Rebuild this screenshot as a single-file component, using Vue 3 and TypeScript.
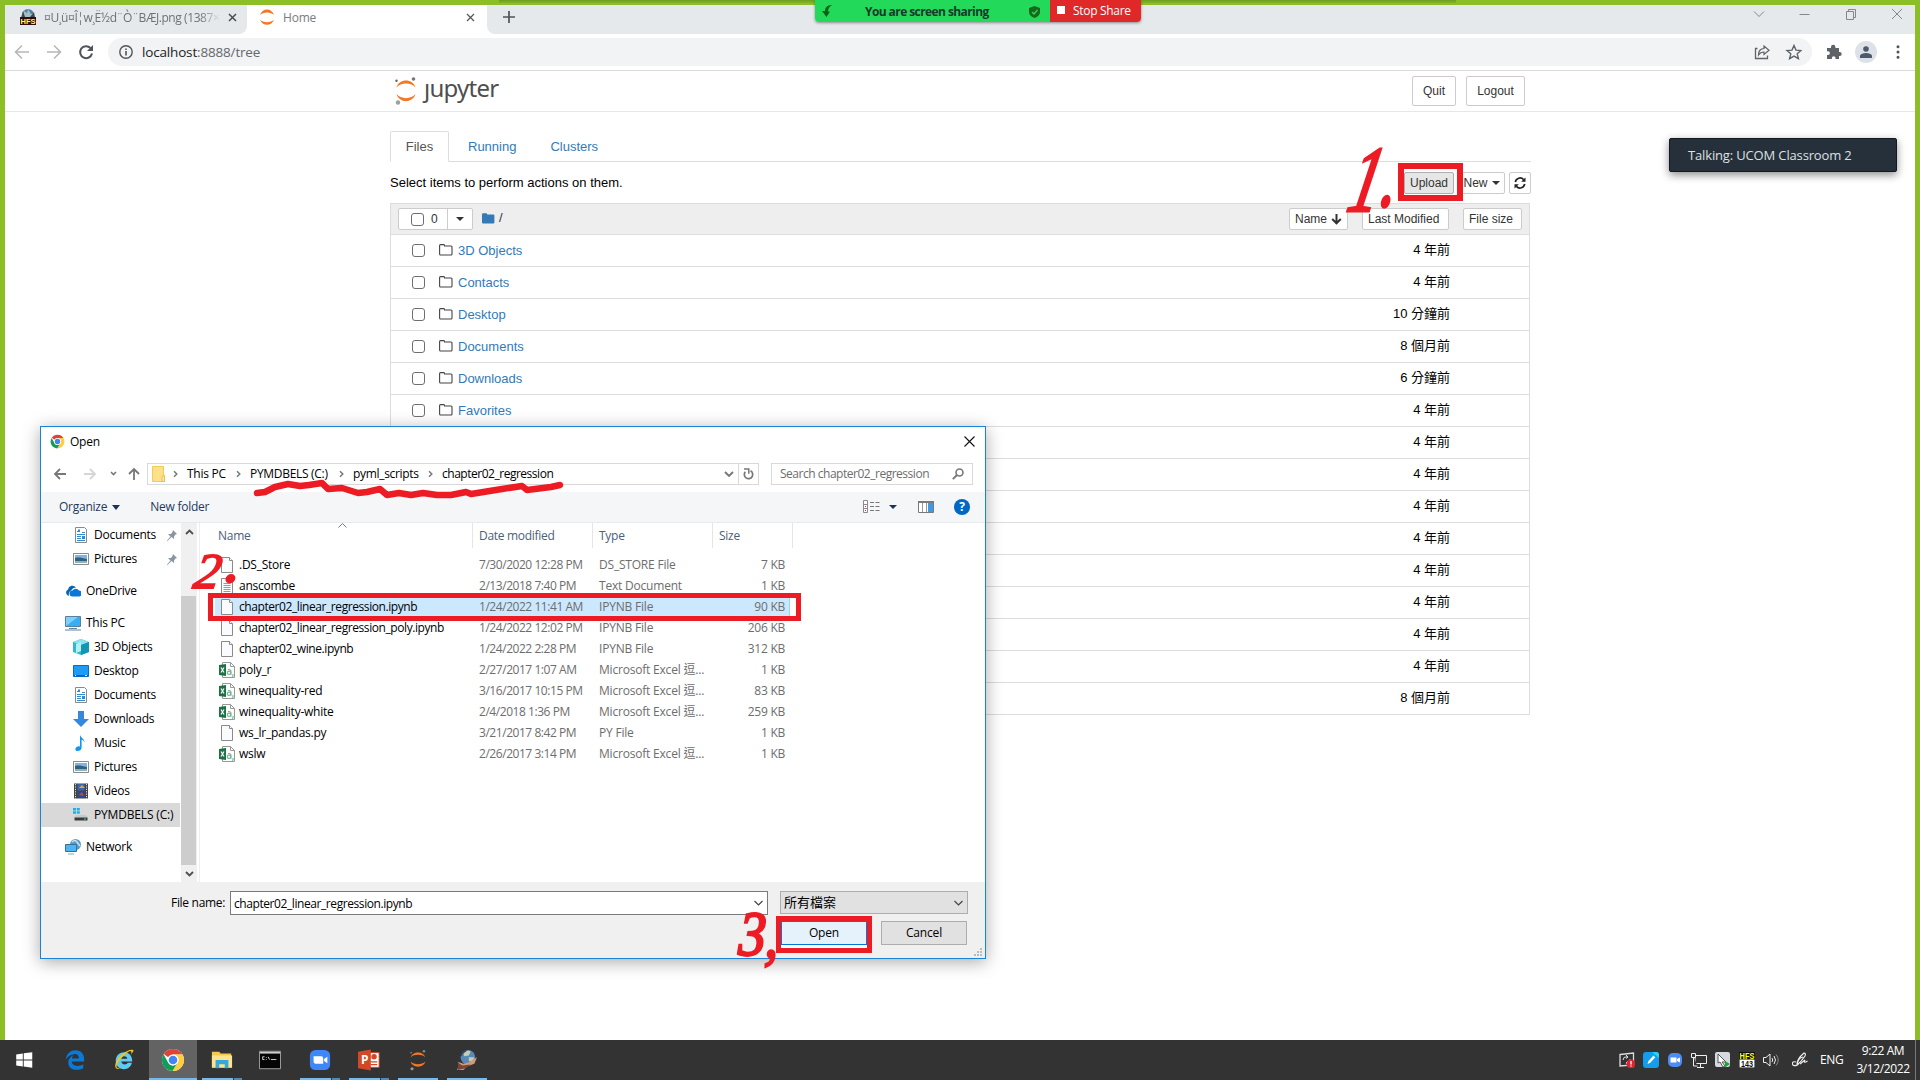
<script setup lang="ts">
interface Folder { name: string; modified: string }
interface TreeItem { label: string; icon: string; top?: boolean; pin?: boolean; gap?: boolean; current?: boolean }
interface FileRow { name: string; date: string; type: string; size: string; icon: string; selected?: boolean }
interface TaskItem { icon: string; left: number; width: number; state: string }

const folders: Folder[] = [
  { name: '3D Objects', modified: '4 年前' },
  { name: 'Contacts', modified: '4 年前' },
  { name: 'Desktop', modified: '10 分鐘前' },
  { name: 'Documents', modified: '8 個月前' },
  { name: 'Downloads', modified: '6 分鐘前' },
  { name: 'Favorites', modified: '4 年前' },
  ...Array.from({ length: 8 }, () => ({ name: '', modified: '4 年前' })),
  { name: '', modified: '8 個月前' },
]

const tree: TreeItem[] = [
  { label: 'Documents', icon: 'docs', pin: true },
  { label: 'Pictures', icon: 'pics', pin: true },
  { label: 'OneDrive', icon: 'cloud', top: true, gap: true },
  { label: 'This PC', icon: 'pc', top: true, gap: true },
  { label: '3D Objects', icon: 'cube' },
  { label: 'Desktop', icon: 'desktop' },
  { label: 'Documents', icon: 'docs' },
  { label: 'Downloads', icon: 'down' },
  { label: 'Music', icon: 'music' },
  { label: 'Pictures', icon: 'pics' },
  { label: 'Videos', icon: 'video' },
  { label: 'PYMDBELS (C:)', icon: 'drive', current: true },
  { label: 'Network', icon: 'network', top: true, gap: true },
]

const excel = 'Microsoft Excel 逗...'
const files: FileRow[] = [
  { name: '.DS_Store', date: '7/30/2020 12:28 PM', type: 'DS_STORE File', size: '7 KB', icon: 'file' },
  { name: 'anscombe', date: '2/13/2018 7:40 PM', type: 'Text Document', size: '1 KB', icon: 'text' },
  { name: 'chapter02_linear_regression.ipynb', date: '1/24/2022 11:41 AM', type: 'IPYNB File', size: '90 KB', icon: 'file', selected: true },
  { name: 'chapter02_linear_regression_poly.ipynb', date: '1/24/2022 12:02 PM', type: 'IPYNB File', size: '206 KB', icon: 'file' },
  { name: 'chapter02_wine.ipynb', date: '1/24/2022 2:28 PM', type: 'IPYNB File', size: '312 KB', icon: 'file' },
  { name: 'poly_r', date: '2/27/2017 1:07 AM', type: excel, size: '1 KB', icon: 'csv' },
  { name: 'winequality-red', date: '3/16/2017 10:15 PM', type: excel, size: '83 KB', icon: 'csv' },
  { name: 'winequality-white', date: '2/4/2018 1:36 PM', type: excel, size: '259 KB', icon: 'csv' },
  { name: 'ws_lr_pandas.py', date: '3/21/2017 8:42 PM', type: 'PY File', size: '1 KB', icon: 'file' },
  { name: 'wslw', date: '2/26/2017 3:14 PM', type: excel, size: '1 KB', icon: 'csv' },
]

const crumbs = ['This PC', 'PYMDBELS (C:)', 'pyml_scripts', 'chapter02_regression']

const tasks: TaskItem[] = [
  { icon: 'win', left: 0, width: 48, state: '' },
  { icon: 'edge', left: 3, width: 48, state: '' },
  { icon: 'ie', left: 1, width: 48, state: '' },
  { icon: 'chrome', left: 1, width: 48, state: 'active' },
  { icon: 'folder', left: 5, width: 40, state: 'multi' },
  { icon: 'cmd', left: 8, width: 40, state: '' },
  { icon: 'zoom', left: 10, width: 40, state: 'multi' },
  { icon: 'ppt', left: 9, width: 40, state: 'multi' },
  { icon: 'jup', left: 9, width: 40, state: 'open' },
  { icon: 'globe', left: 9, width: 40, state: 'open' },
]

const tray = ['tsync', 'tpen', 'tzoom', 'tnet', 'tcursor', 'thfs', 'tvol', 'tink']

const chrome = `<circle cx="12" cy="12" r="11" fill="#fff"/><path d="M12 1a11 11 0 0 1 9.53 5.5H12A5.5 5.5 0 0 0 7.2 9.3L2.8 6A11 11 0 0 1 12 1z" fill="#db4437"/><path d="M21.5 6.5A11 11 0 0 1 11.5 23L16.8 14.7A5.5 5.5 0 0 0 12 6.5z" fill="#ffcd40"/><path d="M2.6 6.2A11 11 0 0 0 11.5 23l4.6-7.4A5.5 5.5 0 0 1 7.2 14.7z" fill="#0f9d58"/><circle cx="12" cy="12" r="5.4" fill="#fff"/><circle cx="12" cy="12" r="4.3" fill="#4285f4"/>`
const page = `<path d="M2.5.5h8l3 3v12h-11z" fill="#fafbfc" stroke="#8a8a8a"/><path d="M10.5.5v3h3" fill="#fff" stroke="#8a8a8a"/>`

const icons: Record<string, string> = {
  file: page,
  text: page + `<path d="M4.500 5.500h7M4.500 7.500h7M4.500 9.500h7M4.500 11.500h7M4.500 13.500h7" stroke="#999"/>`,
  csv: `<path d="M3.500.5h8l4 4v11h-12z" fill="#fff" stroke="#999"/><path d="M11.500.5v4h4" fill="none" stroke="#999"/><path d="M0 3l7-1v12l-7-1z" fill="#1e7145"/><path d="M2 5.500l3 5M5 5.500l-3 5" stroke="#fff" stroke-width="1.200"/><circle cx="10" cy="10.800" r="1.700" fill="none" stroke="#6db58b" stroke-width="1.100"/><path d="M9 7.600q3-.4 3 2v3.200M14 12v2l-1 .6" fill="none" stroke="#6db58b" stroke-width="1.100"/>`,
  docs: `<path d="M2.500.5h9l2 2v13h-11z" fill="#fff" stroke="#8a8a8a"/><path d="M4 4.500h3M9 5.500h3M4 7.500h8M4 9.500h4M4 11.500h4M4 13.500h8" stroke="#2f8bcf"/><path d="M9 9h3v3H9zM5 2.500h2v2H5z" fill="#2f8bcf"/>`,
  pics: `<path d="M.5 2.500h15v11H.5z" fill="#fff" stroke="#8a8a8a"/><path d="M2 4h12v4H2z" fill="#7fb5e6"/><path d="M2 7c4-1 7 0 12 1v4H2z" fill="#33607a"/><path d="M2 10h12v2H2z" fill="#8ab3c4"/>`,
  cloud: `<path d="M4 13a3.500 3.500 0 0 1-1-6.600A4.500 4.500 0 0 1 11 4.500c-2 0-4 1-4.700 3C4 8 3.600 11 4 13z" fill="#0364b8"/><path d="M7.500 13.500a3 3 0 0 1 0-6 3.800 3.800 0 0 1 6.500 0 3 3 0 0 1-.5 6z" fill="#0a78d4"/>`,
  pc: `<path d="M.5 1.500h15v10H.5z" fill="#35aef5" stroke="#5c7f99"/><path d="M1 11L13 2H1z" fill="#7dd0ff"/><path d="M4 13h8v1H4zM0 14.500h16v1H0z" fill="#5c87a5"/>`,
  cube: `<path d="M8 0l8 3v10l-8 3-8-3V3z" fill="#32b9cf"/><path d="M0 3l8-3 8 3-8 3z" fill="#8de3ee"/><path d="M8 6l8-3v10l-8 3z" fill="#1496b3"/><path d="M3 5l5-2v9l-5 2z" fill="#b5f0f5"/>`,
  desktop: `<path d="M.5 2.500h15v11H.5z" fill="#1c9cf6" stroke="#0a6cc0"/><path d="M1 12.500h14" stroke="#0b5ea9"/><path d="M2 12.500h1M12 12.500h2" stroke="#fff"/>`,
  down: `<path d="M5 0h6v8h5l-8 8-8-8h5z" fill="#3289dd"/>`,
  music: `<path d="M7 0c1 3 5 4 4.600 8-.2-2-1.600-3-3-3.200V13c-.4 2-2 3-4 3-3 0-3-4 .4-4.600.8-.2 1.500 0 2 .2z" fill="#1296f3"/>`,
  video: `<path d="M1 .5h14v15H1z" fill="#444"/><path d="M4.500 1h7v6.500h-7z" fill="#3b62b5"/><path d="M4.500 8.500h7V15h-7z" fill="#28499a"/><path d="M6 5l3-3 3 3z" fill="#d2b128"/><path d="M6 12l3-3 2 4z" fill="#ba4c30"/><path d="M2.500 1v15M13.500 1v15" stroke="#ddd" stroke-dasharray="1.200 1.200"/>`,
  drive: `<path d="M0 1h3v2.500H0zM3.800 1h3v2.500h-3zM0 4.300h3v2.500H0zM3.800 4.300h3v2.500h-3z" fill="#1db1ea"/><path d="M3 8h10l2 3H1z" fill="#c5c9cc"/><path d="M1.500 10.500h13v3h-13z" fill="#3a3d3f"/><path d="M11 12h2" stroke="#45e05a"/>`,
  network: `<circle cx="10.500" cy="5.500" r="5.500" fill="#5c9cc4"/><path d="M7 3q3-3 5 0t3 4" fill="none" stroke="#c5e3f2" stroke-width="1.500"/><path d="M.5 5.500h11v7H.5z" fill="#4cb5f5" stroke="#3a6f96"/><path d="M3 15h6" stroke="#8aa"/>`,
  win: `<path d="M3.500 6l7.200-1.100v6.600H3.500zM11.700 4.700L21 3.500v8h-9.300zM3.500 12.500h7.200v6.600L3.500 18zM11.700 12.500H21v8l-9.300-1.300z" fill="#fff"/>`,
  edge: `<path d="M2 11.500C2.600 5 7 1.300 12.500 1.300 19 1.300 22 6 22 11v2.600H8.500c.3 5.500 8 6 12.500 3v4.300c-6.500 3.600-16 2.200-16.400-6 0-4 2.200-6.700 5.600-8.200-1 1.200-1.500 2.300-1.600 3.700h7.600c0-4-2.500-5-5-4.800C7.500 5.800 4 8 2 11.500z" fill="#0a7ad8"/>`,
  ie: `<path d="M12 3.500c5.500 0 9 4 9 10H9c.6 4 6 4.200 7 1.500h4.600c-1 4.500-4.500 7-8.600 7-5.600 0-9-4-9-9.200 0-5.300 3.600-9.300 9-9.300zM9 10.500h6.600C15 7 9.500 7 9 10.500z" fill="#5ecbf3"/><path d="M22 1c-5-2-16 6-19 14-2 6 1 8 5 6-7 1-4-6 1-11S19 .5 20 3c.4 1 0 2-.6 3.500C22 3 23 1.700 22 1z" fill="#f3c61c"/>`,
  chrome,
  folder: `<path d="M1 3h8l1.500 2H22v15H1z" fill="#f2c94c"/><path d="M1 7h22v13.500H1z" fill="#fde28f"/><path d="M5 21v-9h14v9h-4v-4.500H9V21z" fill="#35a8dc"/>`,
  cmd: `<path d="M.5 2.500h23v19H.5z" fill="#050505" stroke="#aaa"/><path d="M1 4h22" stroke="#ccc" stroke-width="2"/><path d="M6 8.500H4v3h2M8 9v.8M8 11v.8M10 8.500l1.500 3M13 11.500h6" stroke="#ddd" fill="none"/>`,
  zoom: `<rect x="1" y="1" width="22" height="22" rx="6" fill="#3f86f8"/><path d="M5 8h8.500q2 0 2 2v6H7q-2 0-2-2zM16.500 11l3.500-2.500v7L16.500 13z" fill="#fff"/>`,
  ppt: `<path d="M11 4h12v16H11z" fill="#fff" stroke="#d24726"/><circle cx="17.500" cy="8.500" r="3" fill="#d24726"/><path d="M14 14h7M14 17h7" stroke="#d24726" stroke-width="1.500"/><path d="M0 3l14-2.500v23L0 21z" fill="#d24726"/><text x="3.200" y="16.500" font-family="Open Sans" font-weight="700" font-size="13" fill="#fff">P</text>`,
  jup: `<path d="M4 9C6 2 18 2 20 9 16 5.500 8 5.500 4 9zM4 14c2 7 14 7 16 0-4 3.500-12 3.500-16 0z" fill="#f37726"/><circle cx="18.500" cy="2.500" r="1.400" fill="#888"/><circle cx="4.500" cy="4" r="1" fill="#777"/><circle cx="5.500" cy="21.500" r="1.700" fill="#999"/>`,
  globe: `<circle cx="13" cy="9" r="8" fill="#5689b8"/><path d="M8 4q4-4 8-1l-2 4-5 1zM14 9l6 0-2 5-4-1z" fill="#c3cdb6"/><path d="M13 1a8 8 0 0 0-8 8l3-4z" fill="#2c3f5c"/><path d="M2 14l6 2 5-1 10-6-3 7-8 3-4 4H1l3-6z" fill="#d09a78"/><path d="M2 15l5 3 9-1-6 4-8 2z" fill="#7a4630"/>`,
  tsync: `<path d="M1 2.500L14.500 1v12L1 14z" fill="none" stroke="#ddd" stroke-width="1.300"/><path d="M4 8q0-3.500 4-3.200M11 7q0 4-4 3.800M7 3l2 2-2 1.500M9 9l-2 2 2 1.500" stroke="#ddd" fill="none"/><circle cx="12" cy="12" r="4.500" fill="#e02230"/><path d="M12 9v3.500M12 13.500v1" stroke="#fff" stroke-width="1.400"/>`,
  tpen: `<rect width="16" height="16" rx="3" fill="#139dec"/><path d="M9 0h4q3 0 3 3v3z" fill="#22d5f5"/><path d="M4.500 12l1-3 5-5.500 1.800 1.700-5 5.500z" fill="#fff"/>`,
  tzoom: `<rect x="1" y="1" width="14" height="14" rx="5" fill="#4a8df8"/><path d="M3.500 5.500h6v5h-6zM10 7l3-1.500v5L10 9z" fill="#fff"/>`,
  tnet: `<path d="M4 3.500h11.500v8H4zM9.500 12v3M6 15.500h7" fill="none" stroke="#eee"/><path d="M.5 1.500h4v4h-4zM2.500 5v9h4" fill="#333" stroke="#eee"/>`,
  tcursor: `<rect width="15" height="15" rx="2" fill="#d6dade"/><path d="M3 2l8 8-4 0 3 4-2 1-3-5-2 1z" fill="#fff" stroke="#555"/><path d="M10 9l5 3-5 3.500z" fill="#16a838"/>`,
  thfs: `<path d="M0 0h16v16H0z" fill="#111"/><path d="M.5 7.500h15v8H.5z" fill="#fff"/><text x=".6" y="6.700" textLength="14.800" lengthAdjust="spacingAndGlyphs" font-family="Liberation Sans" font-weight="700" font-size="8.300" fill="#ff0">HFS</text><text x="2" y="14.700" textLength="12" lengthAdjust="spacingAndGlyphs" font-family="Liberation Sans" font-weight="700" font-size="8.500" fill="#111">143</text>`,
  tvol: `<path d="M.5 5.500H3l4-3.500v12L3 10.500H.500z" fill="none" stroke="#eee"/><path d="M9 6q1.500 2 0 4M11 4q3 4 0 8" fill="none" stroke="#eee"/><path d="M13 2.500q4.500 5.500 0 11" fill="none" stroke="#888"/>`,
  tink: `<path d="M4 10q-4-1-3.500 2t6 .5M5 12q0-5 7-11 2 0 1 3-4 6-8 9 1-7 6-8" fill="none" stroke="#eee" stroke-width="1.200"/><path d="M8 12l5-4q-2 4 2.500 1" fill="none" stroke="#eee" stroke-width="1.200"/>`,
}
</script>

<template>
  <div class="screen">
    <div class="browser">
      <div class="tabstrip">
        <div class="tab first">
          <svg class="hfs" width="16" height="16" viewBox="0 0 16 16"><circle cx="8" cy="6" r="6" fill="#4d7ea8" /><path d="M2 8l2-6 3 2 1-4 3 5 3-1 1 5z" fill="#a4bcc4" /><path d="M1 9l2-7 2 6M10 8l4-5 1 6" fill="#3a4a51" /><path d="M0 8h16v8H0z" fill="#330c0c" /><text x=".5" y="15" textLength="15" lengthAdjust="spacingAndGlyphs" font-family="Liberation Sans" font-size="8" font-weight="700" fill="#ff3">HFS</text></svg>
          <span class="tabtext long">¤U¸ü¤Î¦w¸Ë½d¨Ò¨BÆJ.png (1387×</span>
          <svg class="x" width="9" height="9" viewBox="0 0 9 9"><path d="M1 1l7 7M8 1L1 8" stroke="#4a4d50" stroke-width="1.500" /></svg>
        </div>
        <div class="tab selected">
          <svg width="16" height="16" viewBox="0 0 16 16"><path d="M1 6C3-1.500 13-1.500 15 6 12 2.500 4 2.500 1 6zM1 10.500c2 7 12 7 14 0-3 3.500-11 3.500-14 0z" fill="#f37726" /></svg>
          <span class="tabtext home">Home</span>
          <svg class="x" width="9" height="9" viewBox="0 0 9 9"><path d="M1 1l7 7M8 1L1 8" stroke="#55585c" stroke-width="1.300" /></svg>
        </div>
        <div class="rest">
          <svg width="12" height="12" viewBox="0 0 12 12"><path d="M6 0v12M0 6h12" stroke="#505357" stroke-width="1.700" /></svg>
          <svg class="wins" width="150" height="12" viewBox="0 0 150 12"><path d="M1 3.500l5 5 5-5M46.500 6.500h10M93.500 3.500h7v8h-7zM95.500 3.500v-2h7v8h-2M139 1l10 10M149 1l-10 10" fill="none" stroke="#858789" /></svg>
        </div>
      </div>
      <div class="toolbar">
        <svg class="navs" width="80" height="16" viewBox="0 0 80 16"><path d="M15 8H2M8 1.500L1.500 8 8 14.500M33 8h13M40 1.500L46.500 8 40 14.500" fill="none" stroke="#b4b6b9" stroke-width="1.500" /><path d="M76.500 4A6 6 0 1 0 78 9.500" fill="none" stroke="#505357" stroke-width="2" /><path d="M79 1v6h-6z" fill="#505357" /></svg>
        <div class="omni">
          <svg width="14" height="14" viewBox="0 0 14 14"><circle cx="7" cy="7" r="6.200" fill="none" stroke="#505458" stroke-width="1.400" /><path d="M7 6v4.500M7 3.500v1.500" stroke="#505458" stroke-width="1.600" /></svg>
          <span class="url">localhost<i>:8888/tree</i></span>
          <svg class="omniright" width="48" height="16" viewBox="0 0 48 16"><path d="M3.500 4.500h-2v10h12v-3" fill="none" stroke="#5f6368" stroke-width="1.300" /><path d="M4.500 11c0-4 2-6.500 5.500-6.500V2l5 4.200-5 4.300V8c-2.500 0-4 .8-5.500 3z" fill="none" stroke="#5f6368" stroke-width="1.200" /><path d="M40 1.500l2 4.600 5 .4-3.800 3.300 1.200 4.900-4.400-2.600-4.400 2.600 1.200-4.900L33 6.500l5-.4z" fill="none" stroke="#5f6368" stroke-width="1.400" /></svg>
        </div>
        <svg class="ext" width="16" height="16" viewBox="0 0 16 16"><path d="M1 4h4V3a2 2 0 0 1 4.400 0v1H13v4h.7a2 2 0 0 1 0 4H13v3H9.500v-1a1.800 1.800 0 0 0-3.600 0v1H1v-4h1a1.900 1.900 0 0 0 0-3.800H1z" fill="#5f6368" /></svg>
        <span class="avatar"><svg width="12" height="12" viewBox="0 0 12 12"><circle cx="6" cy="3" r="2.800" fill="#4c5a6c" /><path d="M0 12V9.500C1 6 11 6 12 9.500V12z" fill="#4c5a6c" /></svg></span>
        <svg class="dots" width="4" height="14" viewBox="0 0 4 14"><path d="M2 .3a1.500 1.500 0 1 1 0 3 1.500 1.500 0 0 1 0-3zM2 5.500a1.500 1.500 0 1 1 0 3 1.500 1.500 0 0 1 0-3zM2 10.700a1.500 1.500 0 1 1 0 3 1.500 1.500 0 0 1 0-3z" fill="#505357" /></svg>
      </div>

      <div class="jhead">
        <svg class="jlogo" width="24" height="28" viewBox="0 0 24 28"><path d="M2.500 10.500C5 1 19 1 21.500 10.500c-4-5.500-15-5.500-19 0zM2.500 17c2.500 9.500 16.500 9.500 19 0-4 5.500-15 5.500-19 0z" fill="#f37726" /><circle cx="19.500" cy="2" r="1.800" fill="#767677" /><circle cx="2.500" cy="3.800" r="1.200" fill="#616262" /><circle cx="4" cy="25.500" r="2.200" fill="#9e9e9e" /></svg>
        <span class="jword"><b>j</b>upyter</span>
        <button class="big quit">Quit</button>
        <button class="big">Logout</button>
      </div>

      <div class="jmain">
        <div class="jtabs"><span class="on">Files</span><span>Running</span><span class="cl">Clusters</span></div>
        <div class="jtools">
          <span class="hint">Select items to perform actions on them.</span>
          <button class="up">Upload</button>
          <button class="new">New<i class="caret" /></button>
          <button class="refresh"><svg width="12" height="12" viewBox="0 0 12 12"><path d="M1.300 5A4.800 4.800 0 0 1 9.600 2.600M10.700 7a4.800 4.800 0 0 1-8.300 2.400" fill="none" stroke="#222" stroke-width="1.700" /><path d="M11.500.5v4.300H7.200zM.5 11.500V7.200h4.300z" fill="#222" /></svg></button>
        </div>
        <div class="jlist">
          <div class="lhead">
            <div class="group"><span class="selall"><i class="check" />0</span><span class="drop"><i class="caret" /></span></div>
            <svg class="bluef" width="13" height="11" viewBox="0 0 13 11"><path d="M0 1.500Q0 .3 1.200.3h3q1 0 1 1.300h6q1.200 0 1.200 1.200V9.500q0 1-1.200 1H1.200Q0 10.500 0 9.500z" fill="#337ab7" /></svg>
            <span class="slash">/</span>
            <button class="bname">Name <svg width="11" height="11" viewBox="0 0 11 11"><path d="M5.500 0v9M1.200 5l4.300 4.300L9.800 5" fill="none" stroke="#333" stroke-width="2" /></svg></button>
            <button class="bmod">Last Modified</button>
            <button class="bsize">File size</button>
          </div>
          <div v-for="(f, i) in folders" :key="i" class="lrow">
            <i class="check" />
            <svg class="fo" width="14" height="12" viewBox="0 0 14 12"><path d="M.6 1.600q0-1 1-1h3q1 0 1 1.400h6.400q1 0 1 1v7q0 1-1 1H1.600q-1 0-1-1z" fill="none" stroke="#444" stroke-width="1.100" /></svg>
            <span class="lname">{{ f.name }}</span>
            <span class="lmod">{{ f.modified }}</span>
          </div>
        </div>
      </div>
    </div>

    <div class="sharehandle" />
    <div class="share">
      <div class="sg">
        <svg width="11" height="12" viewBox="0 0 11 12"><path d="M10 0C6 0 3 2 3 6H0l4.500 6L8 6.500H6C6 4 7 2 10 0z" fill="#0c6414" /></svg>
        <span>You are screen sharing</span>
        <svg width="11" height="12" viewBox="0 0 11 12"><path d="M5.500 0L11 2v4c0 3-2.500 5-5.500 6C2.500 11 0 9 0 6V2z" fill="#17671d" /><path d="M3 6l2 2 3.500-4" fill="none" stroke="#2bd95b" stroke-width="1.300" /></svg>
      </div>
      <div class="sr"><i />Stop Share</div>
    </div>
    <div class="talking">Talking: UCOM Classroom 2</div>

    <div class="dialog">
      <div class="dtitle">
        <svg width="15" height="15" viewBox="0 0 24 24" v-html="chrome" />
        <span>Open</span>
        <svg class="dx" width="11" height="11" viewBox="0 0 11 11"><path d="M.5.5l10 10M10.500.5l-10 10" stroke="#111" stroke-width="1.100" /></svg>
      </div>
      <div class="dnav">
        <svg class="arrows" width="90" height="16" viewBox="0 0 90 16"><path d="M13 8H2M7 3L2 8l5 5" fill="none" stroke="#777" stroke-width="1.800" /><path d="M31 8h11M37 3l5 5-5 5" fill="none" stroke="#d5d5d5" stroke-width="1.800" /><path d="M58 6l2.500 2.500L63 6" fill="none" stroke="#777" stroke-width="1.600" /><path d="M81 14V3M76 8l5-5 5 5" fill="none" stroke="#777" stroke-width="1.800" /></svg>
        <div class="addr">
          <svg class="yf" width="13" height="16" viewBox="0 0 13 16"><path d="M.5.5h11v9h1v6H.5z" fill="#ffe08a" stroke="#f3cb55" /><path d="M10 10v5.500h2.500V10z" fill="#ffe9a6" stroke="#e5b93f" stroke-width=".8" /></svg>
          <template v-for="c in crumbs" :key="c"><svg class="sep" width="5" height="8" viewBox="0 0 5 8"><path d="M1 1.200L3.800 4 1 6.800" fill="none" stroke="#777" stroke-width="1.500" /></svg><span :class="['crumb', 'c' + c.length]">{{ c }}</span></template>
          <svg class="adown" width="10" height="7" viewBox="0 0 10 7"><path d="M1 1l4 4 4-4" fill="none" stroke="#777" stroke-width="1.900" /></svg>
          <span class="arefresh"><svg width="11" height="12" viewBox="0 0 11 12"><path d="M7.500 2.800A4.200 4.200 0 1 1 2.300 3.800" fill="none" stroke="#777" stroke-width="1.700" /><path d="M1 1h4.800v4.800" fill="none" stroke="#777" stroke-width="1.500" /></svg></span>
        </div>
        <div class="search"><span>Search chapter02_regression</span><svg width="12" height="12" viewBox="0 0 12 12"><circle cx="7.500" cy="4.500" r="3.500" fill="none" stroke="#777" stroke-width="1.600" /><path d="M5 7L.8 11.200" stroke="#777" stroke-width="1.900" /></svg></div>
      </div>
      <div class="dtools">
        <span class="org">Organize</span><i class="caret navy" />
        <span class="nf">New folder</span>
        <svg class="views" width="100" height="18" viewBox="0 0 100 18"><path d="M.5 2.500h4v12h-4zM.5 6.500h4M.5 10.500h4" fill="#fff" stroke="#8a8a8a" /><path d="M7 4.500h4M12.500 4.500h4M7 8.500h4M12.500 8.500h4M7 12.500h4M12.500 12.500h4" stroke="#777" /><path d="M2 8.500h1M2 12.500h1" stroke="#d33" /><path d="M26 7h8l-4 4z" fill="#1c3358" /><path d="M55.500 3.500h15v11h-15z" fill="#fff" stroke="#7a7a7a" /><path d="M55 4h16" stroke="#7a7a7a" stroke-width="2" /><path d="M59.500 5v9M63.500 5v9" stroke="#999" /><path d="M65 5h5v9h-5z" fill="#3e9ae6" /></svg>
        <span class="help">?</span>
      </div>
      <div class="dbody">
        <div class="tree">
          <div v-for="(t, i) in tree" :key="i" :class="['titem', { top: t.top, gap: t.gap, current: t.current }]">
            <svg width="16" height="16" viewBox="0 0 16 16" v-html="icons[t.icon]" />
            <span>{{ t.label }}</span>
            <svg v-if="t.pin" class="pin" width="10" height="11" viewBox="0 0 10 11"><path d="M6 0l4 4-1.500.5L7 6.500V9L4.500 7 .5 11 0 10.500l3.500-4L1 4h3l1.500-2z" fill="#8a95a0" /></svg>
          </div>
        </div>
        <div class="scroll">
          <svg width="9" height="6" viewBox="0 0 9 6"><path d="M1 5l3.500-3.500L8 5" fill="none" stroke="#505050" stroke-width="1.800" /></svg>
          <i />
          <svg width="9" height="6" viewBox="0 0 9 6"><path d="M1 1l3.500 3.500L8 1" fill="none" stroke="#505050" stroke-width="1.800" /></svg>
        </div>
        <div class="files">
          <div class="cols"><span class="c1">Name<svg width="9" height="5" viewBox="0 0 9 5"><path d="M.5 4.500l4-4 4 4" fill="none" stroke="#777" /></svg></span><span class="c2">Date modified</span><span class="c3">Type</span><span class="c4">Size</span></div>
          <div v-for="f in files" :key="f.name" :class="['frow', { sel: f.selected }]">
            <svg width="16" height="16" viewBox="0 0 16 16" v-html="icons[f.icon]" />
            <span :class="['fname', { wide: f.name.length > 18 }]">{{ f.name }}</span><span class="fdate">{{ f.date }}</span><span class="ftype">{{ f.type }}</span><span class="fsize">{{ f.size }}</span>
          </div>
        </div>
      </div>
      <div class="dfoot">
        <div class="frow1">
          <label>File name:</label>
          <div class="finput"><span>chapter02_linear_regression.ipynb</span><svg width="9" height="6" viewBox="0 0 9 6"><path d="M.5 1l4 4 4-4" fill="none" stroke="#444" stroke-width="1.200" /></svg></div>
          <div class="fsel"><span>所有檔案</span><svg width="9" height="6" viewBox="0 0 9 6"><path d="M.5 1l4 4 4-4" fill="none" stroke="#444" stroke-width="1.200" /></svg></div>
        </div>
        <div class="frow2"><button class="open">Open</button><button>Cancel</button></div>
        <svg class="grip" width="8" height="8" viewBox="0 0 8 8"><path d="M6 0h2v2H6zM3 3h2v2H3zM6 3h2v2H6zM0 6h2v2H0zM3 6h2v2H3zM6 6h2v2H6z" fill="#bbb" /></svg>
      </div>
    </div>

    <div class="taskbar">
      <div v-for="t in tasks" :key="t.icon" :class="['task', t.state]" :style="{ width: t.width + 'px', marginLeft: t.left + 'px' }">
        <svg :width="t.icon === 'chrome' ? 24 : 22" :height="t.icon === 'chrome' ? 24 : 22" viewBox="0 0 24 24" v-html="icons[t.icon]" />
      </div>
      <div class="tray">
        <svg v-for="n in tray" :key="n" width="16" height="16" viewBox="0 0 16 16" v-html="icons[n]" />
      </div>
      <span class="eng">ENG</span>
      <div class="clock"><span class="time">9:22 AM</span><span class="date">3/12/2022</span></div>
      <i class="peek" />
    </div>

    <svg class="ink" width="1920" height="1080" viewBox="0 0 1920 1080">
      <g fill="none" stroke="#ed1c24" stroke-width="5">
        <rect x="1401" y="166" width="59" height="32" stroke-width="6" />
        <rect x="210.500" y="595.500" width="588" height="23" />
        <rect x="778.500" y="918.500" width="91" height="32" />
        <path d="M257 493l8-1 10-5 13-3 12 2 9-1 13-2 6 6 14-1 16 5 9-1 13-3 7 6 12-2 12 2 12-2 14 2 14 0 15-3 5 2 31-5 20-3 5 4 24-3 9-2" stroke-width="6.500" stroke-linejoin="round" stroke-linecap="round" />
      </g>
      <g fill="#ed1c24" stroke="#ed1c24" font-family="Liberation Serif" font-style="italic" font-weight="400">
        <text transform="translate(1345 211) skewX(-12) scale(.66 1)" font-size="94" stroke-width="3">1<tspan dx="2" dy="-5">.</tspan></text>
        <text transform="translate(192 588) skewX(-10) scale(1.050 1)" font-size="50" stroke-width="1.800">2<tspan dx="5" dy="-7" stroke-width="3.500">.</tspan></text>
        <text transform="translate(738 955) skewX(-3) scale(.86 1)" font-size="63" stroke-width="2.600">3<tspan dx="-1" dy="2">,</tspan></text>
      </g>
    </svg>
  </div>
</template>

<style>
body { margin: 0; background: #fff; overflow: hidden; }
</style>

<style scoped>
* { box-sizing: border-box; }
svg { flex: none; display: block; }
i { font-style: normal; }
button { font: inherit; font-size: 12px; padding: 0; margin: 0; color: #333; background: #fff; border: 1px solid #ccc; border-radius: 2px; display: flex; align-items: center; justify-content: center; }
.screen { position: relative; width: 1920px; height: 1080px; overflow: hidden; background: #fff; white-space: nowrap; display: flex; flex-direction: column; }
.browser { height: 1040px; border: 5px solid #8cbf26; border-bottom: 0; font-family: "Liberation Sans", "Noto Sans CJK TC", sans-serif; font-size: 13px; flex: none; }
.tabstrip { height: 29px; display: flex; background: #fff; }
.tab { display: flex; align-items: center; height: 29px; padding-bottom: 5px; }
.first { width: 242px; background: #e5e9ec; border-bottom-right-radius: 8px; padding-left: 15px; }
.tabtext { font-family: "Open Sans", "Noto Sans", sans-serif; font-size: 12px; color: #6f7174; margin-left: 8px; }
.long { width: 177px; overflow: hidden; letter-spacing: -.42px; -webkit-mask-image: linear-gradient(90deg, #000 88%, transparent); mask-image: linear-gradient(90deg, #000 88%, transparent); }
.first .x { margin-left: 7px; }
.selected { width: 240px; padding-left: 12px; }
.selected .x { margin-left: auto; margin-right: 12px; }
.home { letter-spacing: -.2px; color: #7a7c7e; }
.rest { flex: 1; background: #e5e9ec; border-bottom-left-radius: 8px; display: flex; padding: 6px 12px 0 16px; justify-content: space-between; }
.wins { margin-top: -3px; }
.toolbar { height: 37px; display: flex; align-items: center; border-bottom: 1px solid #d8dadc; padding-left: 9px; }
.navs { width: 80px; }
.omni { margin-left: 14px; width: 1704px; height: 28px; border-radius: 14px; background: #f1f3f4; display: flex; align-items: center; padding-left: 11px; }
.url { margin-left: 9px; font-family: "Open Sans", sans-serif; font-size: 13.500px; letter-spacing: -.17px; color: #222; }
.url i { color: #65686c; }
.omniright { margin-left: auto; margin-right: 10px; }
.ext { margin-left: 14px; }
.avatar { width: 22px; height: 22px; border-radius: 50%; background: #dde1e8; margin-left: 13px; display: flex; align-items: center; justify-content: center; }
.dots { margin-left: 19px; }
.jhead { height: 41px; border-bottom: 1px solid #e7e7e7; display: flex; padding: 5px 0 0 389px; }
.jlogo { margin-top: 1px; }
.jword { font-family: "Noto Sans", sans-serif; font-size: 24px; line-height: 24px; color: #4e4e4e; margin-left: 6px; width: 80px; letter-spacing: -.75px; }
.jword b { font-weight: 400; display: inline-block; clip-path: inset(7px -5px -9px -5px); }
.big { height: 30px; width: 59px; }
.quit { width: 44px; margin: 0 10px 0 908px; }
.jmain { width: 1141px; margin-left: 385px; padding-top: 19px; }
.jtabs { height: 31px; border-bottom: 1px solid #ddd; display: flex; color: #337ab7; line-height: 32px; }
.jtabs span { margin-left: 19px; }
.jtabs .on { margin: 0; width: 59px; height: 31px; border: 1px solid #ddd; border-bottom-color: #fff; border-radius: 2px 2px 0 0; color: #555; text-align: center; background: #fff; line-height: 30px; }
.jtabs .cl { margin-left: 34px; }
.jtools { height: 41px; display: flex; padding-top: 10px; line-height: 22px; }
.hint { width: 1014px; color: #000; }
.jtools button { height: 22px; }
.up { width: 50px; background: #e6e6e6; border-color: #adadad; }
.new { width: 47px; margin-left: 4px; }
.refresh { width: 22px; margin-left: 4px; }
.caret { width: 0; height: 0; border: 4px solid transparent; border-top-color: #333; border-bottom: 0; margin-left: 4px; flex: none; }
.jlist { width: 1140px; border: 1px solid #ddd; border-bottom: 0; }
.lhead { height: 31px; background: #eee; border-bottom: 1px solid #ddd; display: flex; padding: 4px 0 0 7px; line-height: 20px; }
.lhead button { height: 22px; }
.group { display: flex; width: 75px; height: 22px; background: #fff; border: 1px solid #ccc; border-radius: 2px; color: #333; font-size: 12px; }
.selall { width: 49px; display: flex; align-items: center; padding-left: 12px; gap: 7px; border-right: 1px solid #ccc; }
.drop { display: flex; align-items: center; padding-left: 4px; }
.check { width: 13px; height: 13px; border: 1px solid #6f6f6f; border-radius: 3px; background: #fff; flex: none; }
.bluef { margin: 5px 0 0 9px; }
.slash { margin-left: 4px; color: #333; width: 790px; }
.bname { width: 59px; gap: 4px; }
.lhead .bmod { width: 87px; margin-left: 14px; padding-left: 5px; justify-content: flex-start; }
.lhead .bsize { width: 59px; margin-left: 14px; padding-left: 5px; justify-content: flex-start; }
.lrow { height: 32px; border-bottom: 1px solid #ddd; display: flex; align-items: center; padding-left: 21px; }
.fo { margin-left: 14px; margin-top: -2px; }
.lname { margin-left: 5px; color: #337ab7; }
.lmod { margin-left: auto; margin-right: 79px; color: #000; line-height: 20px; padding-bottom: 2px; }

.sharehandle { position: absolute; left: 499px; top: 0; width: 957px; height: 3px; background: linear-gradient(#6f9c20, #85b525); }
.share { position: absolute; left: 815px; top: 0; width: 326px; height: 22px; display: flex; font: 12px "Open Sans", sans-serif; box-shadow: 0 1px 3px rgba(0,0,0,.4); border-radius: 0 0 4px 4px; overflow: hidden; }
.sg { width: 235px; background: #23d959; color: #173a2c; font-weight: 700; display: flex; align-items: center; padding: 0 0 0 7px; letter-spacing: -.58px; }
.sg span { margin-left: 32px; width: 125px; }
.sg svg:last-child { margin-left: 39px; margin-top: 2px; }
.sr { width: 91px; background: #e02828; color: #fff; display: flex; align-items: center; padding: 0 0 2px 7px; letter-spacing: -.3px; }
.sr i { width: 8px; height: 8px; background: #fff; margin-right: 8px; }
.talking { position: absolute; left: 1669px; top: 138px; width: 228px; height: 34px; background: #26303a; border: 1px solid #14191f; border-radius: 2px; box-shadow: 0 3px 9px rgba(0,0,0,.45); color: #dde0e3; font: 13px/32px "Open Sans", sans-serif; padding-left: 18px; letter-spacing: -.15px; }

.dialog { position: absolute; left: 40px; top: 426px; width: 946px; height: 533px; border: 1px solid #1883d7; background: #fff; box-shadow: 0 3px 16px rgba(0,0,0,.34); font: 12px "Open Sans", "Noto Sans CJK TC", sans-serif; letter-spacing: -.25px; color: #000; display: flex; flex-direction: column; }
.dtitle { height: 35px; display: flex; align-items: center; padding: 0 10px 6px 9px; }
.dtitle span { margin-left: 5px; padding-bottom: 1px; }
.dx { margin-left: auto; }
.dnav { height: 30px; padding-top: 1px; display: flex; align-items: flex-start; }
.arrows { margin: 3px 0 0 12px; }
.addr { margin-left: 4px; width: 612px; height: 22px; border: 1px solid #d9d9d9; display: flex; align-items: center; padding-left: 4px; }
.sep { margin: 0 9px; }
.yf + .sep { margin: 0 9px 0 8px; }
.crumb { line-height: 20px; }
.c7 { width: 40px; }
.c13 { width: 80px; letter-spacing: -.3px; }
.c12 { width: 66px; letter-spacing: -.32px; }
.c20 { letter-spacing: -.48px; }
.adown { margin-left: auto; margin-right: 4px; }
.arefresh { width: 20px; height: 20px; border-left: 1px solid #d9d9d9; display: flex; align-items: center; justify-content: center; }
.search { margin-left: 12px; width: 202px; height: 22px; border: 1px solid #d9d9d9; display: flex; align-items: center; justify-content: space-between; padding: 0 8px 1px; color: #6d6d6d; letter-spacing: -.48px; }
.dtools { height: 31px; background: #f5f6f7; border-bottom: 1px solid #e8e9ea; color: #1e395b; display: flex; align-items: center; padding-left: 18px; }
.dtools .org, .dtools .nf { padding-bottom: 1px; }
.navy { border-top-color: #1c3358; margin-left: 5px; border-top-width: 5px; }
.nf { margin-left: 30px; }
.views { margin-left: auto; margin-right: -9px; }
.help { width: 16px; height: 16px; border-radius: 50%; background: #0067c5; color: #fff; font-weight: 700; font-size: 12px; line-height: 16px; text-align: center; margin-right: 15px; z-index: 1; }
.dbody { height: 359px; display: flex; }
.tree { width: 140px; }
.titem { height: 24px; display: flex; align-items: center; padding-left: 32px; width: 139px; }
.titem span { margin-left: 5px; padding-bottom: 2px; }
.titem.top { padding-left: 24px; }
.titem.gap { margin-top: 8px; }
.titem.current { background: #d9d9d9; }
.titem.current span { letter-spacing: -.17px; }
.pin { margin-left: auto; margin-right: 3px; }
.scroll { width: 16px; background: #f0f0f0; display: flex; flex-direction: column; align-items: center; padding-top: 6px; }
.scroll i { width: 15px; height: 269px; background: #cdcdcd; margin: 61px 1px 6px 0; }
.files { margin-left: 2px; border-left: 1px solid #eee; flex: 1; }
.cols { height: 31px; display: flex; color: #4c607a; line-height: 25px; }
.cols span { height: 25px; border-right: 1px solid #e5e5e5; padding-left: 6px; width: 120px; }
.cols .c1 { width: 273px; padding-left: 18px; display: flex; }
.c1 svg { margin: 0 0 0 87px; }
.cols .c2 { letter-spacing: -.3px; }
.cols .c4 { width: 80px; }
.frow { height: 21px; width: 575px; margin-left: 15px; padding-left: 4px; display: flex; align-items: center; color: #6d6d6d; line-height: 20px; }
.frow.sel { background: #cce8ff; border-right: 1px solid #99d1ff; }
.fname { margin-left: 4px; width: 240px; color: #000; }
.fname.wide { letter-spacing: -.42px; }
.fdate { width: 120px; letter-spacing: -.45px; }
.ftype { width: 120px; letter-spacing: -.2px; }
.fsize { width: 66px; text-align: right; }
.dfoot { flex: 1; background: #f0f0f0; position: relative; }
.frow1 { display: flex; padding: 9px 0 0 130px; }
.frow1 label { width: 59px; line-height: 24px; letter-spacing: -.3px; }
.finput { width: 538px; height: 24px; background: #fff; border: 1px solid #7a7a7a; display: flex; align-items: center; justify-content: space-between; padding: 0 4px 0 3px; letter-spacing: -.42px; }
.fsel { margin-left: 12px; width: 188px; height: 23px; background: #e1e1e1; border: 1px solid #adadad; display: flex; align-items: center; justify-content: space-between; padding: 0 4px 0 3px; font-size: 13px; letter-spacing: 0; line-height: 20px; }
.fsel span { padding-bottom: 2px; }
.frow2 { display: flex; padding: 6px 0 0 740px; gap: 14px; }
.frow2 button { width: 86px; height: 24px; border-radius: 0; background: #e1e1e1; border-color: #adadad; color: #000; padding-bottom: 2px; letter-spacing: -.15px; }
.frow2 .open { background: #e5f1fb; border-color: #0078d7; box-shadow: 0 3px #fff; }
.grip { position: absolute; right: 3px; bottom: 2px; }

.taskbar { height: 40px; background: #333; display: flex; align-items: stretch; flex: none; font-family: "Open Sans", sans-serif; font-size: 12px; color: #fff; }
.task { display: flex; align-items: center; justify-content: center; flex: none; border-bottom: 2px solid transparent; padding-top: 2px; }
.active { background: #636363; border-color: #76b9ed; }
.task.open { border-color: #76b9ed; }
.multi { border-image: linear-gradient(90deg, #76b9ed 0 31px, #333 31px 32px, #5788b0 32px) 0 0 2 0; }
.tray { margin-left: auto; display: flex; align-items: center; gap: 8px; }
.tray svg:nth-child(8) { margin-left: 5px; }
.eng { line-height: 40px; margin-left: 12px; letter-spacing: -.4px; width: 24px; }
.clock { width: 62px; margin-left: 8px; display: flex; flex-direction: column; align-items: center; line-height: 18px; padding-top: 2px; letter-spacing: -.4px; }
.peek { width: 5px; border-left: 1px solid #777; margin-left: 1px; }
.ink { position: absolute; left: 0; top: 0; }
</style>
